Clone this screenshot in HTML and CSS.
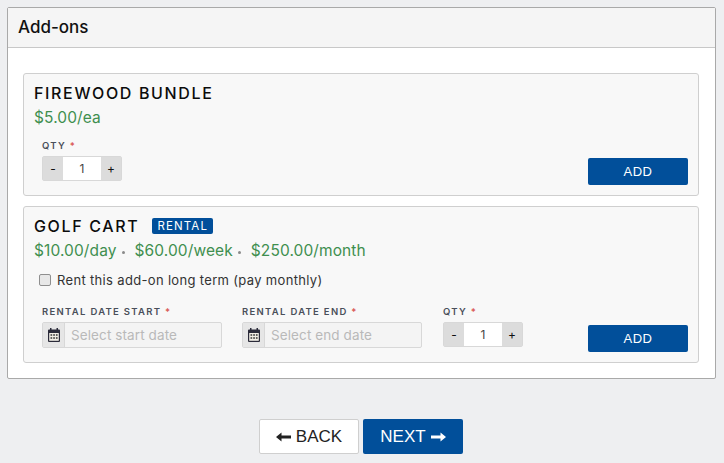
FILE: index.html
```html
<!DOCTYPE html>
<html lang="en">
<head>
<meta charset="utf-8">
<title>Add-ons</title>
<link rel="stylesheet" href="styles.css">
</head>
<body>
<section class="panel">
  <header class="panel-head">Add-ons</header>
  <div class="panel-body">
    <article class="card card-one">
      <h3 class="name">FIREWOOD BUNDLE</h3>
      <div class="prices"><span>$5.00/ea</span></div>
      <div class="row row-one">
        <div class="field">
          <label class="lbl">QTY <b>*</b></label>
          <div class="stepper"><span class="step">-</span><span class="val">1</span><span class="step">+</span></div>
        </div>
        <button class="add">ADD</button>
      </div>
    </article>
    <article class="card card-two">
      <h3 class="name">GOLF CART <span class="badge">RENTAL</span></h3>
      <div class="prices"><span>$10.00/day</span><i class="dot"></i><span>$60.00/week</span><i class="dot"></i><span>$250.00/month</span></div>
      <label class="check"><span class="box"></span>Rent this add-on long term (pay monthly)</label>
      <div class="row row-two">
        <div class="field date">
          <label class="lbl">RENTAL DATE START <b>*</b></label>
          <div class="dateinput">
            <span class="cal"><svg width="12" height="14" viewBox="0 0 12 14"><path class="cal-body" d="M2 0h1.500v1.500h5V0H10v1.500h1a1 1 0 0 1 1 1V13a1 1 0 0 1-1 1H1a1 1 0 0 1-1-1V2.500a1 1 0 0 1 1-1h1z"/><path class="cal-grid" d="M1.200 5h9.600v7.800H1.200z"/><path class="cal-cell" d="M2.500 6.200h1.700v1.500H2.500zM5.200 6.200h1.700v1.500H5.200zM7.900 6.200h1.700v1.500H7.900zM2.500 9.200h1.700v1.500H2.500zM5.200 9.200h1.700v1.500H5.200zM7.900 9.200h1.700v1.500H7.900z"/></svg></span>
            <span class="ph">Select start date</span>
          </div>
        </div>
        <div class="field date">
          <label class="lbl">RENTAL DATE END <b>*</b></label>
          <div class="dateinput">
            <span class="cal"><svg width="12" height="14" viewBox="0 0 12 14"><path class="cal-body" d="M2 0h1.500v1.500h5V0H10v1.500h1a1 1 0 0 1 1 1V13a1 1 0 0 1-1 1H1a1 1 0 0 1-1-1V2.500a1 1 0 0 1 1-1h1z"/><path class="cal-grid" d="M1.200 5h9.600v7.800H1.200z"/><path class="cal-cell" d="M2.500 6.200h1.700v1.500H2.500zM5.200 6.200h1.700v1.500H5.200zM7.900 6.200h1.700v1.500H7.900zM2.500 9.200h1.700v1.500H2.500zM5.200 9.200h1.700v1.500H5.200zM7.900 9.200h1.700v1.500H7.900z"/></svg></span>
            <span class="ph">Select end date</span>
          </div>
        </div>
        <div class="field qty-last">
          <label class="lbl">QTY <b>*</b></label>
          <div class="stepper"><span class="step">-</span><span class="val">1</span><span class="step">+</span></div>
        </div>
        <button class="add">ADD</button>
      </div>
    </article>
  </div>
</section>
<nav class="nav">
  <button class="btn back"><svg width="15" height="10" viewBox="0 0 15 10"><path d="M0 5l5.500-4.500v3H15v3H5.500v3z"/></svg>BACK</button>
  <button class="btn next">NEXT<svg width="15" height="10" viewBox="0 0 15 10"><path d="M15 5L9.500.5v3H0v3h9.500v3z"/></svg></button>
</nav>
</body>
</html>
```
FILE: styles.css
```css
* { box-sizing: border-box; }
html, body { margin: 0; height: 100%; }
body {
  background: #eeeff1;
  padding: 7px 8px 0 7px;
  font-family: Inter, "Open Sans", sans-serif;
  color: #111;
  overflow: hidden;
}
.panel {
  width: 709px;
  height: 372px;
  background: #fff;
  border: 1px solid #a9a9a9;
  border-radius: 2px;
}
.panel-head {
  height: 40px;
  background: #f5f5f5;
  border-bottom: 1px solid #c8c8c8;
  padding: 9px 10px 0;
  font-size: 17px;
  line-height: 20px;
  font-weight: 500;
}
.panel-body {
  padding: 25px 16px 0 15px;
  display: flex;
  flex-direction: column;
  gap: 10px;
}
.card {
  background: #f8f8f8;
  border: 1px solid #cfcfcf;
  border-radius: 3px;
  padding: 9px 10px 0;
}
.card-one { height: 123px; }
.card-two { height: 157px; }
.name {
  margin: 0;
  font-size: 16px;
  line-height: 20px;
  font-weight: 500;
  letter-spacing: 1.65px;
  color: #0c0c0c;
}
.badge {
  display: inline-block;
  vertical-align: 2px;
  margin-left: 7px;
  height: 16px;
  width: 61px;
  text-align: center;
  background: #014f9a;
  border-radius: 2px;
  color: #fff;
  font-size: 11.500px;
  font-weight: 400;
  line-height: 16px;
  letter-spacing: 1.1px;
}
.prices {
  display: flex;
  align-items: center;
  margin-top: 5px;
  font-size: 15.500px;
  letter-spacing: .1px;
  line-height: 20px;
  color: #3f8f4f;
}
.dot {
  width: 3px;
  height: 3px;
  margin: 3px 10px 0 5px;
  background: #8a8a8a;
  border-radius: 50%;
}
.check {
  display: flex;
  align-items: center;
  margin: 10px 0 0 5px;
  height: 18px;
  font-size: 13px;
  letter-spacing: .33px;
  color: #333;
}
.box {
  width: 12px;
  height: 12px;
  margin-right: 6px;
  background: #e8e8e8;
  border: 1px solid #8f8f8f;
  border-radius: 2px;
}
.row { display: flex; align-items: flex-start; padding-left: 8px; }
.row-one { margin-top: 12px; }
.row-two { margin-top: 17px; }
.field { display: flex; flex-direction: column; }
.date { width: 180px; margin-right: 20px; }
.qty-last { margin-left: 1px; }
.lbl {
  font-size: 9.500px;
  line-height: 12px;
  font-weight: 600;
  letter-spacing: 1.3px;
  color: #4a4f5a;
  margin-bottom: 4px;
}
.lbl b { color: #d9534f; font-weight: 600; }
.stepper {
  display: flex;
  width: 80px;
  height: 25px;
  border: 1px solid #d8d8d8;
  border-radius: 2px;
  background: #fff;
}
.step {
  width: 20px;
  background: #dcdcdc;
  text-align: center;
  font-size: 12px;
  line-height: 23px;
  color: #111;
}
.val {
  flex: 1;
  text-align: center;
  font-size: 12px;
  line-height: 23px;
  color: #444;
}
.dateinput {
  display: flex;
  height: 26px;
  border: 1px solid #d8d8d8;
  border-radius: 2px;
  background: #f4f4f4;
}
.cal {
  width: 22px;
  display: flex;
  align-items: center;
  justify-content: center;
  background: #e6e6e6;
  border-right: 1px solid #d8d8d8;
}
.cal-body { fill: #2b2b3a; }
.cal-grid { fill: #f2efe6; }
.cal-cell { fill: #333; }
.ph {
  padding-left: 6px;
  font-size: 13.500px;
  letter-spacing: .1px;
  line-height: 24px;
  color: #b9b9b9;
}
.add {
  margin-left: auto;
  width: 100px;
  height: 27px;
  background: #014f9a;
  border: 0;
  border-radius: 2px;
  color: #fff;
  font-family: "Liberation Sans", Arial, sans-serif;
  font-size: 13px;
  letter-spacing: .5px;
}
.row-one .add { margin-top: 18px; }
.row-two .add { margin-top: 19px; }
.nav {
  display: flex;
  justify-content: center;
  gap: 4px;
  margin-top: 40px;
  padding-right: 1px;
}
.btn {
  width: 100px;
  height: 35px;
  display: flex;
  align-items: center;
  justify-content: center;
  gap: 5px;
  border-radius: 2px;
  font-family: "Liberation Sans", Arial, sans-serif;
  font-size: 17px;
}
.btn svg { fill: currentColor; }
.back { background: #fff; border: 1px solid #cfcfcf; color: #222; }
.next { background: #014f9a; border: 0; color: #fff; }
```
